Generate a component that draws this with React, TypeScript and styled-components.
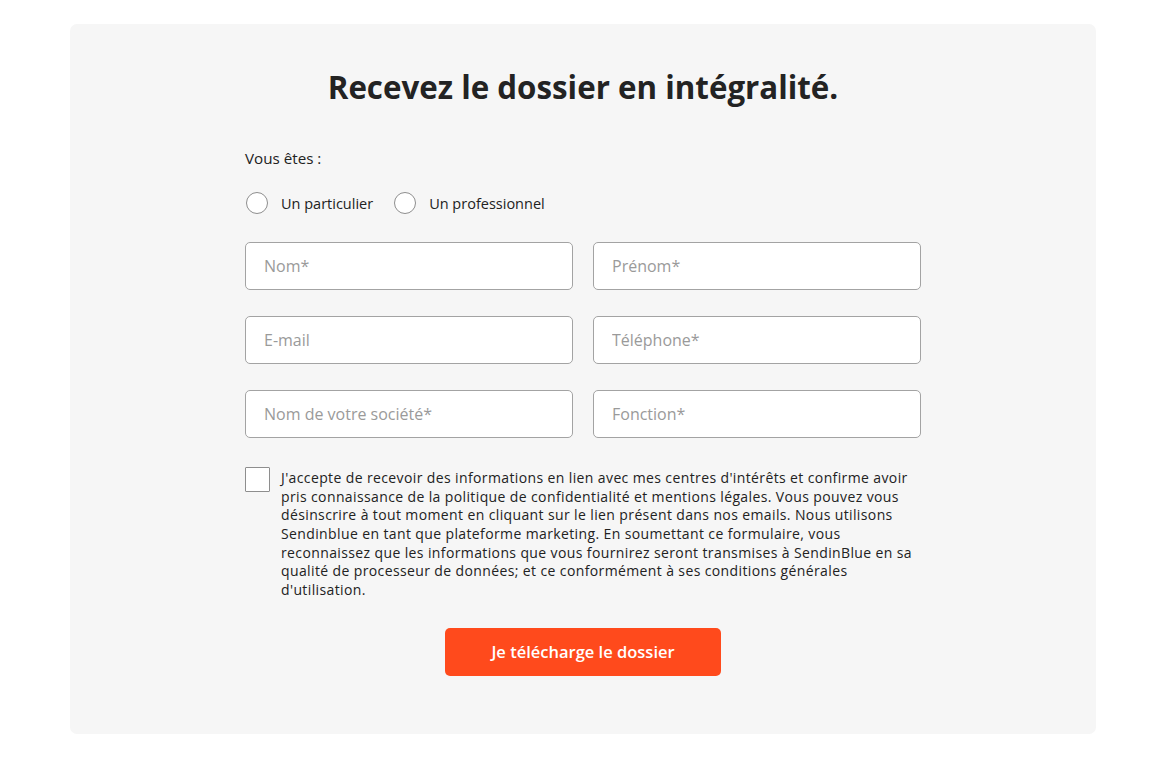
import React from "react";
import styled, { createGlobalStyle } from "styled-components";

const FONT = `"Open Sans", "Noto Sans", sans-serif`;

const Global = createGlobalStyle`
  html, body { margin: 0; padding: 0; background: #ffffff; }
  body { font-family: ${FONT}; color: #222; }
  * { box-sizing: border-box; }
`;

const Page = styled.div`
  padding: 24px 53px 34px 70px;
`;

const Card = styled.section`
  background: #f6f6f6;
  border-radius: 7px;
  height: 710px;
  padding: 44px 0 0;
  display: flex;
  flex-direction: column;
  align-items: center;
`;

const Title = styled.h1`
  margin: 0;
  font-size: 31.3px;
  font-weight: 700;
  color: #232323;
  line-height: 38px;
`;

const Form = styled.form`
  width: 676px;
  margin-top: 43px;
  display: flex;
  flex-direction: column;
`;

const Label = styled.div`
  font-size: 15.2px;
  color: #222;
  line-height: 18px;
`;

const RadioRow = styled.div`
  display: flex;
  align-items: center;
  gap: 21px;
  margin-top: 25px;
  padding-left: 1px;
`;

const RadioItem = styled.label`
  display: flex;
  align-items: center;
  gap: 13px;
  font-size: 14.5px;
  color: #222;
`;

const Circle = styled.span`
  width: 22px;
  height: 22px;
  border-radius: 50%;
  border: 1px solid #8e8e8e;
  background: #fff;
`;

const Grid = styled.div`
  display: grid;
  grid-template-columns: 328px 328px;
  column-gap: 20px;
  row-gap: 26px;
  margin-top: 28px;
`;

const Input = styled.input`
  height: 48px;
  border: 1px solid #a3a3a3;
  border-radius: 5px;
  background: #fff;
  padding: 0 18px;
  font-family: ${FONT};
  font-size: 16px;
  color: #222;
  &::placeholder { color: #9a9a9a; }
`;

const Consent = styled.div`
  display: flex;
  gap: 11px;
  margin-top: 28px;
`;

const Box = styled.span`
  flex: none;
  width: 25px;
  height: 25px;
  border: 1px solid #8e8e8e;
  background: #fff;
  border-radius: 1px;
  margin-top: 1px;
`;

const Legal = styled.p`
  margin: 3px 0 0;
  width: 640px;
  font-size: 14px;
  letter-spacing: 0.38px;
  line-height: 18.67px;
  color: #222;
`;

const LegalLine = styled.span`
  display: block;
  white-space: nowrap;
`;

const Button = styled.button`
  align-self: center;
  margin-top: 28px;
  width: 276px;
  height: 48px;
  border: none;
  border-radius: 5px;
  background: #ff4a1c;
  color: #fff;
  font-family: ${FONT};
  font-size: 16.5px;
  font-weight: 600;
`;

const fields = [
  "Nom*",
  "Prénom*",
  "E-mail",
  "Téléphone*",
  "Nom de votre société*",
  "Fonction*",
];

const legalLines = [
  "J'accepte de recevoir des informations en lien avec mes centres d'intérêts et confirme avoir",
  "pris connaissance de la politique de confidentialité et mentions légales. Vous pouvez vous",
  "désinscrire à tout moment en cliquant sur le lien présent dans nos emails. Nous utilisons",
  "Sendinblue en tant que plateforme marketing. En soumettant ce formulaire, vous",
  "reconnaissez que les informations que vous fournirez seront transmises à SendinBlue en sa",
  "qualité de processeur de données; et ce conformément à ses conditions générales",
  "d'utilisation.",
];

export default function App() {
  return (
    <Page>
      <Global />
      <Card>
        <Title>Recevez le dossier en intégralité.</Title>
        <Form onSubmit={(e) => e.preventDefault()}>
          <Label>Vous êtes :</Label>
          <RadioRow>
            <RadioItem>
              <Circle />
              Un particulier
            </RadioItem>
            <RadioItem>
              <Circle />
              Un professionnel
            </RadioItem>
          </RadioRow>
          <Grid>
            {fields.map((f) => (
              <Input key={f} placeholder={f} />
            ))}
          </Grid>
          <Consent>
            <Box />
            <Legal>
              {legalLines.map((l) => (
                <LegalLine key={l}>{l}</LegalLine>
              ))}
            </Legal>
          </Consent>
          <Button type="submit">Je télécharge le dossier</Button>
        </Form>
      </Card>
    </Page>
  );
}
